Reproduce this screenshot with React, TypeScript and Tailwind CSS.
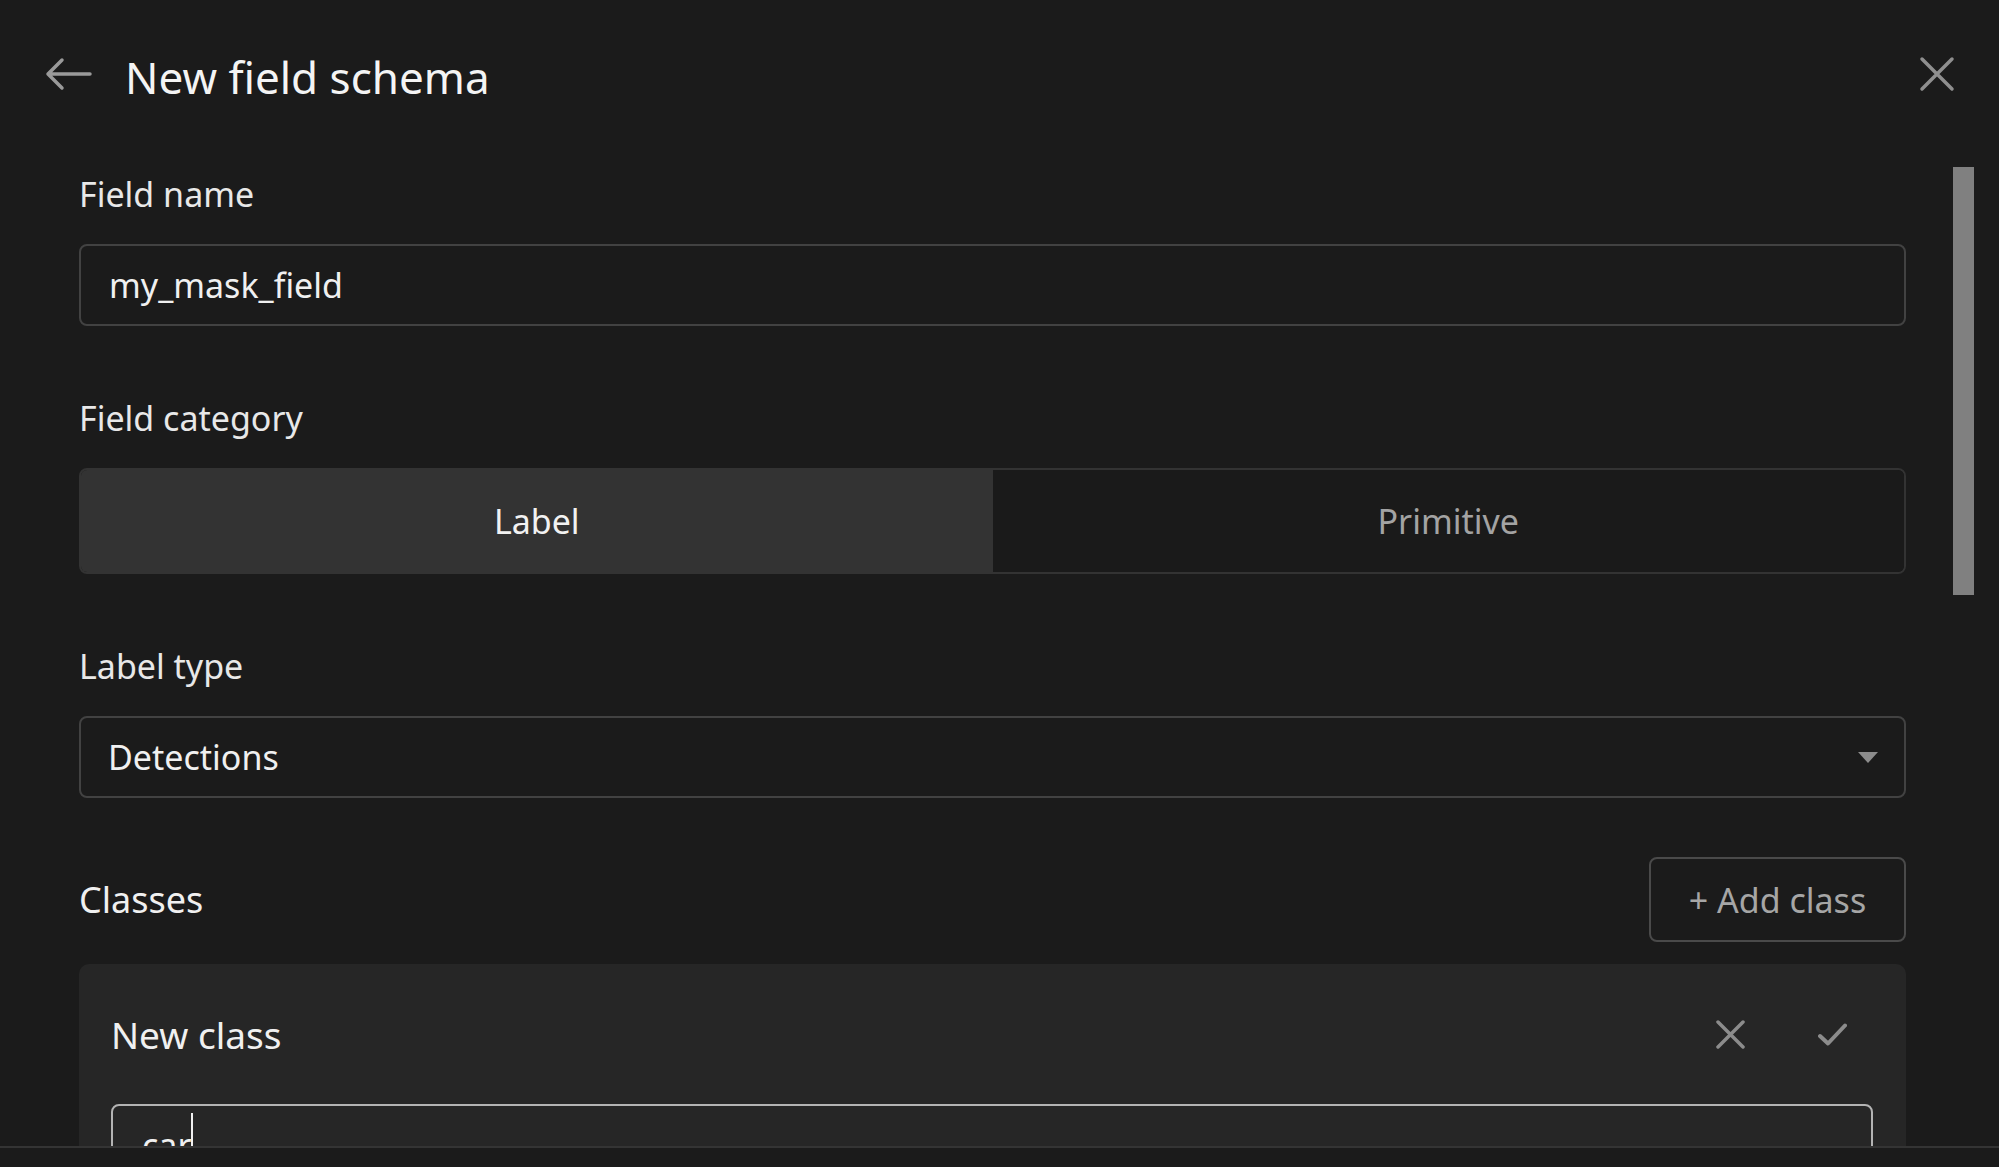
export default function App() {
  return (
    <div className="h-[1167px] w-full overflow-hidden bg-[#1b1b1b] font-['Noto_Sans',sans-serif] text-[#ececec] flex flex-col">
      <header className="h-[148px] shrink-0 flex items-center pl-[45px] pr-[44px]">
        <svg width="47" height="34" viewBox="0 0 47 34" fill="none" stroke="#9a9a9a" strokeWidth="3.5" strokeLinecap="round" strokeLinejoin="round">
          <path d="M3 17H45M17 3L3 17L17 31" />
        </svg>
        <h1 className="ml-[33px] pt-[5px] text-[44px] leading-none text-[#f4f4f4]">New field schema</h1>
        <svg className="ml-auto" width="36" height="36" viewBox="0 0 36 36" fill="none" stroke="#8f8f8f" strokeWidth="3.5" strokeLinecap="round">
          <path d="M3 3L33 33M33 3L3 33" />
        </svg>
      </header>

      <div className="mt-[19px] flex-1 min-h-0 flex pl-[79px] pr-[25px] overflow-hidden">
        <div className="flex-1 min-w-0 flex flex-col">
          <div className="h-[54px] shrink-0 flex items-center text-[34px] leading-none text-[#e8e8e8]">Field name</div>
          <div className="mt-[23px] h-[82px] shrink-0 rounded-[8px] border-2 border-[#424242] flex items-center px-[28px] text-[34px] leading-none text-[#f0f0f0]">
            my_mask_field
          </div>

          <div className="mt-[65px] h-[54px] shrink-0 flex items-center text-[34px] leading-none text-[#e8e8e8]">Field category</div>
          <div className="mt-[23px] h-[106px] shrink-0 grid grid-cols-2 rounded-[8px] border-2 border-[#333333] overflow-hidden">
            <div className="bg-[#333333] flex items-center justify-center text-[34px] leading-none text-[#f2f2f2]">Label</div>
            <div className="bg-[#1a1a1a] flex items-center justify-center text-[34px] leading-none text-[#a3a3a3]">Primitive</div>
          </div>

          <div className="mt-[65px] h-[54px] shrink-0 flex items-center text-[34px] leading-none text-[#e8e8e8]">Label type</div>
          <div className="mt-[23px] h-[82px] shrink-0 rounded-[8px] border-2 border-[#424242] flex items-center pl-[27px] pr-[26px] text-[34px] leading-none text-[#f0f0f0]">
            <span>Detections</span>
            <svg className="ml-auto" width="20" height="11" viewBox="0 0 20 11">
              <path d="M0 0H20L10 11Z" fill="#8c8c8c" />
            </svg>
          </div>

          <div className="mt-[59px] h-[85px] shrink-0 flex items-center justify-between">
            <span className="text-[36px] leading-none text-[#f0f0f0]">Classes</span>
            <button className="w-[257px] h-[85px] rounded-[8px] border-2 border-[#4a4a4a] flex items-center justify-center text-[34px] leading-none text-[#a6a6a6]">
              + Add class
            </button>
          </div>

          <div className="mt-[22px] shrink-0 rounded-[10px] bg-[#262626] pl-[32px] pr-[33px] pb-[80px]">
            <div className="h-[140px] flex items-center">
              <span className="text-[37px] leading-none text-[#f0f0f0]">New class</span>
              <svg className="ml-auto" width="29" height="29" viewBox="0 0 29 29" fill="none" stroke="#8c8c8c" strokeWidth="3.5" strokeLinecap="round">
                <path d="M2 2L27 27M27 2L2 27" />
              </svg>
              <svg className="ml-[73px] mr-[26px]" width="29" height="23" viewBox="0 0 29 23" fill="none" stroke="#8c8c8c" strokeWidth="4" strokeLinecap="round" strokeLinejoin="round">
                <path d="M2 13L10 20.5L27 2.5" />
              </svg>
            </div>
            <div className="h-[82px] rounded-[8px] border-2 border-[#b3b3b3] flex items-center px-[29px] text-[34px] leading-none text-[#f0f0f0]">
              <span>car</span>
              <span className="inline-block w-[2px] h-[64px] bg-[#f0f0f0]" />
            </div>
            <div className="h-[200px]" />
          </div>
        </div>
        <div className="ml-[47px] w-[21px] shrink-0">
          <div className="h-[428px] bg-[#808080]" />
        </div>
      </div>

      <div className="h-[21px] shrink-0 border-t-2 border-[#343434] bg-[#1b1b1b]" />
    </div>
  );
}
